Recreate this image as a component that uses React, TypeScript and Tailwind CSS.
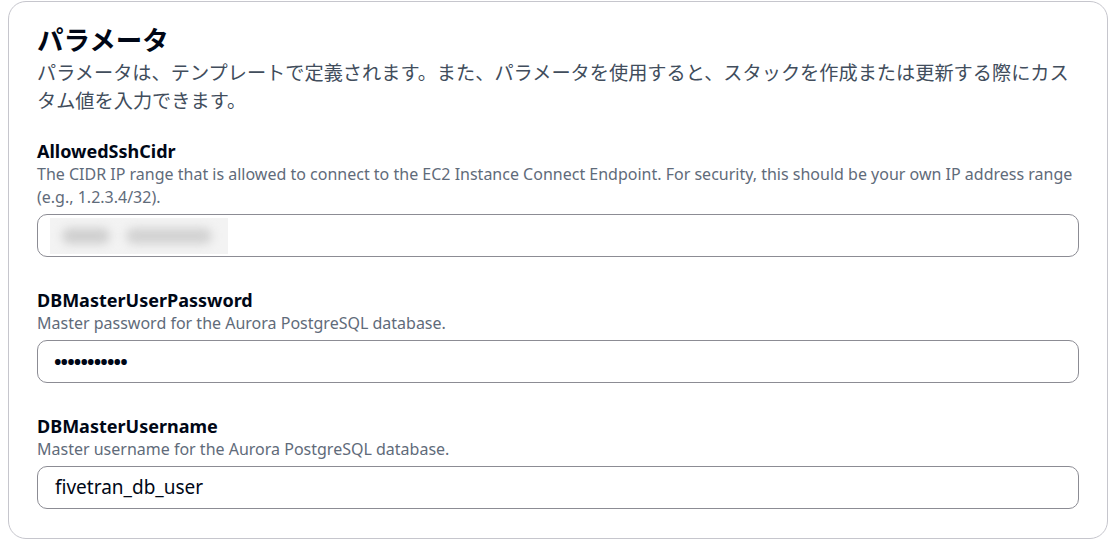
import React from 'react';

const font = { fontFamily: "'Noto Sans', 'Noto Sans CJK JP', sans-serif" };

type Field = {
  name: string;
  description: string;
  value: React.ReactNode;
};

const fields: Field[] = [
  {
    name: 'AllowedSshCidr',
    description:
      'The CIDR IP range that is allowed to connect to the EC2 Instance Connect Endpoint. For security, this should be your own IP address range (e.g., 1.2.3.4/32).',
    value: (
      <div className="ml-[12px] flex h-[36px] w-[178px] items-center gap-[16px] bg-[#f3f3f3] pl-[12px]">
        {/* redacted value */}
        <div className="h-[16px] w-[48px] rounded-full bg-[#cfcfcf] blur-[5px]" />
        <div className="h-[16px] w-[86px] rounded-full bg-[#d2d2d2] blur-[5px]" />
      </div>
    ),
  },
  {
    name: 'DBMasterUserPassword',
    description: 'Master password for the Aurora PostgreSQL database.',
    value: <span className="pl-[16px] text-[20px] font-bold tracking-[-0.9px] text-[#000716]">•••••••••••</span>,
  },
  {
    name: 'DBMasterUsername',
    description: 'Master username for the Aurora PostgreSQL database.',
    value: <span className="pl-[17px] text-[19px] text-[#000716]">fivetran_db_user</span>,
  },
];

function ParameterField({ field }: { field: Field }) {
  return (
    <div className="flex flex-col">
      <div className="text-[18px] font-bold leading-[24px] text-[#000716]">{field.name}</div>
      <div className="text-[16px] leading-[23px] text-[#5f6b7a]">{field.description}</div>
      <div className="mt-[5px] flex h-[43px] items-center rounded-[10px] border border-[#8c8c94] bg-white">
        {field.value}
      </div>
    </div>
  );
}

export default function App() {
  return (
    <div className="min-h-[539px] bg-white pl-2 pt-px" style={font}>
      <div className="flex h-[538px] w-[1100px] flex-col rounded-[18px] border border-[#c6c6cd] bg-white px-[28px] pt-[21px]">
        <h2 className="text-[26.5px] font-bold leading-[34px] text-[#000716]">パラメータ</h2>
        <p className="mt-[2px] text-[19.2px] leading-[28px] text-[#414d5c]">
          パラメータは、テンプレートで定義されます。また、パラメータを使用すると、スタックを作成または更新する際にカスタム値を入力できます。
        </p>
        <div className="mt-[24px] flex flex-col gap-[31px]">
          {fields.map((f) => (
            <ParameterField key={f.name} field={f} />
          ))}
        </div>
      </div>
    </div>
  );
}
